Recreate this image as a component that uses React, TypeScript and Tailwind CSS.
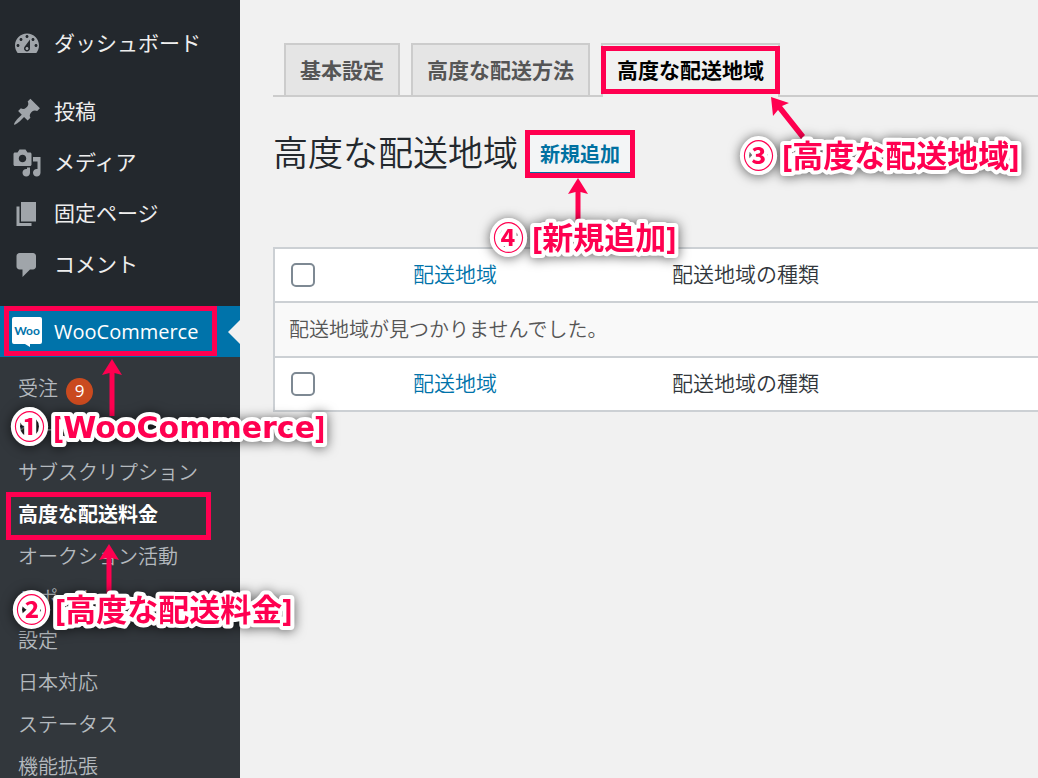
import type { ReactNode } from "react";
import clsx from "clsx";

const menu = [
  {
    id: 1,
    title: "ダッシュボード",
    icon: "M3.76 16h12.48c1.1-1.37 1.76-3.11 1.76-5 0-4.42-3.58-8-8-8s-8 3.58-8 8c0 1.89.66 3.63 1.76 5zM10 4c.55 0 1 .45 1 1s-.45 1-1 1-1-.45-1-1 .45-1 1-1zM6 6c.55 0 1 .45 1 1s-.45 1-1 1-1-.45-1-1 .45-1 1-1zm8 0c.55 0 1 .45 1 1s-.45 1-1 1-1-.45-1-1 .45-1 1-1zm-5.37 5.55L12 7v6c0 1.1-.9 2-2 2s-2-.9-2-2c0-.57.24-1.08.63-1.45zM4 10c.55 0 1 .45 1 1s-.45 1-1 1-1-.45-1-1 .45-1 1-1zm12 0c.55 0 1 .45 1 1s-.45 1-1 1-1-.45-1-1 .45-1 1-1zm-5 3c0-.55-.45-1-1-1s-1 .45-1 1 .45 1 1 1 1-.45 1-1z",
  },
  {
    id: 2,
    title: "投稿",
    icon: "M10.44 3.02l1.82-1.82 6.36 6.35-1.83 1.82c-1.05-.68-2.48-.57-3.41.36l-.75.75c-.92.93-1.04 2.35-.35 3.41l-1.83 1.82-2.41-2.41-2.8 2.79c-.42.42-3.38 2.71-3.8 2.29s1.86-3.39 2.28-3.81l2.79-2.79L4.1 9.36l1.83-1.82c1.05.69 2.48.57 3.4-.36l.75-.75c.93-.92 1.05-2.35.36-3.41z",
  },
  {
    id: 3,
    title: "メディア",
    icon: "M13 11V4c0-.55-.45-1-1-1h-1.67L9 1H5L3.67 3H2c-.55 0-1 .45-1 1v7c0 .55.45 1 1 1h10c.55 0 1-.45 1-1zM7 4.5c1.38 0 2.5 1.12 2.5 2.5S8.38 9.5 7 9.5 4.5 8.38 4.5 7 5.62 4.5 7 4.5zM14 6h5v10.5c0 1.38-1.12 2.5-2.5 2.5S14 17.88 14 16.5s1.12-2.5 2.5-2.5c.17 0 .34.02.5.05V9h-3V6zm-4 8.05V13h2v3.5c0 1.38-1.12 2.5-2.5 2.5S7 17.88 7 16.5 8.12 14 9.5 14c.17 0 .34.02.5.05z",
  },
  {
    id: 4,
    title: "固定ページ",
    icon: "M6 15V2h10v13H6zm-1 1h8v2H3V5h2v11z",
  },
  {
    id: 5,
    title: "コメント",
    icon: "M5 2h9c1.1 0 2 .9 2 2v7c0 1.1-.9 2-2 2h-2l-5 5v-5H5c-1.1 0-2-.9-2-2V4c0-1.1.9-2 2-2z",
  },
];

const submenu = [
  { id: 1, title: "受注", count: 9 },
  { id: 2, title: "クーポン" },
  { id: 3, title: "サブスクリプション" },
  { id: 4, title: "高度な配送料金", current: true },
  { id: 5, title: "オークション活動" },
  { id: 6, title: "レポート" },
  { id: 7, title: "設定" },
  { id: 8, title: "日本対応" },
  { id: 9, title: "ステータス" },
  { id: 10, title: "機能拡張" },
];

const tabs = [
  { id: 1, title: "基本設定" },
  { id: 2, title: "高度な配送方法" },
  { id: 3, title: "高度な配送地域", current: true },
];

function Frame({ className }: { className: string }) {
  return (
    <span
      className={clsx(
        "pointer-events-none absolute z-10 border-5 border-[#ff0050]",
        className,
      )}
    />
  );
}

function ArrowUp({ className }: { className: string }) {
  return (
    <svg
      viewBox="0 0 20 60"
      preserveAspectRatio="xMidYMin slice"
      className={clsx("pointer-events-none absolute z-10 w-5 fill-[#ff0050]", className)}
    >
      <path d="M10 0L20 16L12.500 14V60H7.500V14L0 16z" />
    </svg>
  );
}

// svg text, so the white outline gets round corners
function Note({ className, children }: { className: string; children: ReactNode }) {
  return (
    <svg
      className={clsx(
        "pointer-events-none absolute z-20 h-10 w-80 overflow-visible [filter:drop-shadow(0_1px_6px_rgb(0_0_0/0.6))]",
        className,
      )}
    >
      <text
        x="0"
        y="32"
        className="fill-[#ff0050] stroke-white stroke-[8px] text-[31px] font-bold [paint-order:stroke] [stroke-linejoin:round]"
      >
        {children}
      </text>
    </svg>
  );
}

function WooIcon() {
  return (
    <svg viewBox="0 0 30 30" className="size-[30px]">
      <path
        fill="#fff"
        d="M2 0h26a2 2 0 0 1 2 2v23a2 2 0 0 1-2 2H18v3l-5-3H2a2 2 0 0 1-2-2V2a2 2 0 0 1 2-2z"
      />
      <text
        x="15"
        y="18"
        textAnchor="middle"
        fill="#0073aa"
        className="font-['Lato'] text-[12px] font-bold"
      >
        Woo
      </text>
    </svg>
  );
}

function Sidebar() {
  return (
    <nav className="w-60 shrink-0 bg-[#23282d] pt-[18px]">
      <ul className="text-[21px] text-[#eee]">
        {menu.map((item) => (
          <li key={item.id} className="first:mb-[17px]">
            <a href="#" className="flex h-[51px] items-center gap-3 pl-3">
              <svg viewBox="0 0 20 20" className="size-[30px] fill-[#a0a5aa]">
                <path d={item.icon} />
              </svg>
              {item.title}
            </a>
          </li>
        ))}
        <li className="mt-4">
          <div className="relative">
            <a
              href="#"
              className="flex h-[51px] items-center gap-3 bg-[#0073aa] pl-3 text-[20px] text-white"
            >
              <WooIcon />
              WooCommerce
            </a>
            <svg viewBox="0 0 12 24" className="absolute top-[14px] right-0 h-6 w-3">
              <path d="M12 0v24L0 12z" fill="#f1f1f1" />
            </svg>
            <Frame className="top-0 left-1 h-[50px] w-[213px]" />
            <ArrowUp className="top-[53px] left-[102px] h-[57px]" />
            <Note className="top-[100px] left-[14px]">
              ① [<tspan className="font-['DejaVu_Sans'] text-[30px]">WooCommerce</tspan>]
            </Note>
          </div>
          <ul className="bg-[#32373c] pt-[11px] pb-[10px] text-[20px] font-[350] text-[#b4b9be]">
            {submenu.map((item) => (
              <li key={item.id} className="relative">
                <a
                  href="#"
                  className={clsx(
                    "flex h-[42px] items-center gap-2 pl-[18px]",
                    item.current && "font-bold text-white",
                  )}
                >
                  {item.title}
                  {item.count && (
                    <span className="mt-1 flex size-[27px] items-center justify-center rounded-full bg-[#ca4a1f] text-[17px] font-normal text-white">
                      {item.count}
                    </span>
                  )}
                </a>
                {item.current && (
                  <>
                    <Frame className="-top-0.5 left-1.5 h-12 w-[205px]" />
                    <ArrowUp className="top-[50px] left-[99px] h-[50px]" />
                    <Note className="top-[95px] left-4">② [高度な配送料金]</Note>
                  </>
                )}
              </li>
            ))}
          </ul>
        </li>
      </ul>
    </nav>
  );
}

function HeadCells({ id }: { id: string }) {
  return (
    <>
      <td className="w-[126px] pl-4">
        <input
          id={id}
          type="checkbox"
          aria-label="すべて選択"
          className="block size-6 appearance-none rounded-[5px] border-2 border-[#7e8993] bg-white"
        />
      </td>
      <th scope="col" className="w-[259px] pl-[13px] text-left font-[350]">
        <a href="#" className="text-[#0073aa]">
          配送地域
        </a>
      </th>
      <th scope="col" className="pl-[13px] text-left font-[350]">
        配送地域の種類
      </th>
    </>
  );
}

export default function App() {
  return (
    <div className="flex h-screen overflow-hidden bg-[#f1f1f1] font-['Open_Sans','Noto_Sans_CJK_JP',sans-serif]">
      <Sidebar />
      <main className="min-w-0 flex-1 pt-[43px] pl-[33px]">
        <div className="flex gap-[11px] border-b-2 border-[#ccc] pl-[11px]">
          {tabs.map((tab) => (
            <a
              key={tab.id}
              href="#"
              className={clsx(
                "relative border-2 border-b-0 px-[14px] pt-[7px] text-[21px] leading-9 font-bold",
                tab.current
                  ? "-mb-0.5 border-[#ccc] bg-[#f1f1f1] pb-[9px] text-black"
                  : "border-[#ccc] bg-[#e5e5e5] pb-[7px] text-[#555]",
              )}
            >
              {tab.title}
              {tab.current && (
                <>
                  <Frame className="top-px -right-0.5 -left-0.5 h-12" />
                  <svg
                    viewBox="0 0 36 44"
                    className="pointer-events-none absolute top-[52px] left-[167px] z-10 h-11 w-9 fill-[#ff0050]"
                  >
                    <path d="M1 0L19 6L12 9L35 38L31 42L8 13L3 19z" />
                  </svg>
                  <Note className="top-[90px] left-[140px]">③ [高度な配送地域]</Note>
                </>
              )}
            </a>
          ))}
        </div>
        <div className="mt-8 flex items-center gap-[7px]">
          <h1 className="text-[35px] leading-[48px] font-[350] text-[#23282d]">
            高度な配送地域
          </h1>
          <div className="relative">
            <button className="flex h-[42px] items-center rounded-sm border-2 border-[#0071a1] bg-[#f3f5f6] px-[13px] pt-[3px] text-[20px] font-bold text-[#0071a1]">
              新規追加
            </button>
            <Frame className="-top-0.5 right-0 left-0 h-12" />
            <ArrowUp className="top-[46px] left-[43px] h-[46px]" />
            <Note className="top-[85px] -left-8">④ [新規追加]</Note>
          </div>
        </div>
        <table className="mt-[70px] w-full table-fixed border-collapse border-2 border-r-0 border-[#ccd0d4] bg-white text-[21px] text-[#32373c]">
          <thead>
            <tr className="h-[54px]">
              <HeadCells id="select-all-top" />
            </tr>
          </thead>
          <tbody>
            <tr className="h-[55px] border-y-2 border-[#ccd0d4] bg-[#f9f9f9]">
              <td colSpan={3} className="pl-[14px] text-[20px] font-[350] text-[#555]">
                配送地域が見つかりませんでした。
              </td>
            </tr>
          </tbody>
          <tfoot>
            <tr className="h-[54px]">
              <HeadCells id="select-all-bottom" />
            </tr>
          </tfoot>
        </table>
      </main>
    </div>
  );
}
